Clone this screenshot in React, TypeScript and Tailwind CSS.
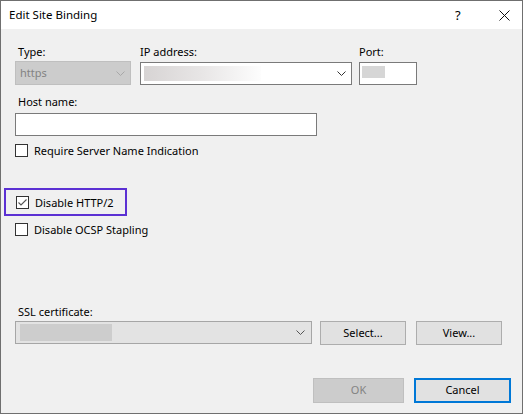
import type { ReactNode } from 'react';

const Chevron = ({ color }: { color: string }) => (
  <svg width="9" height="5" viewBox="0 0 9 5" fill="none">
    <path d="M0.5 0.5 L4.5 4.5 L8.5 0.5" stroke={color} strokeWidth="1" />
  </svg>
);

const CheckBox = ({ checked, label }: { checked?: boolean; label: string }) => (
  <div className="flex items-center h-[15px]">
    <div className="w-[13px] h-[13px] border border-[#333333] bg-white flex items-center justify-center">
      {checked && (
        <svg width="11" height="11" viewBox="0 0 11 11" fill="none">
          <path d="M1.5 5.5 L4 8 L9.5 2.5" stroke="#555555" strokeWidth="1.1" />
        </svg>
      )}
    </div>
    <span className="ml-[6px] leading-[15px]">{label}</span>
  </div>
);

const Button = ({ children, className }: { children: ReactNode; className: string }) => (
  <div className={`flex items-center justify-center ${className}`}>{children}</div>
);

const EditSiteBinding = () => {
  return (
    <div
      className="w-[523px] h-[414px] border border-[#6f6f6f] bg-[#f0f0f0] flex flex-col text-[11px] text-black overflow-hidden"
      style={{ fontFamily: '"Segoe UI", "Noto Sans", sans-serif' }}
    >
      {/* title bar */}
      <div className="h-[28px] bg-white flex items-center pl-[8px] shrink-0">
        <span className="flex-1 leading-[16px] text-[11.5px]">Edit Site Binding</span>
        <span className="w-[10px] text-[13px] leading-[16px] mr-[34px]">?</span>
        <svg width="11" height="11" viewBox="0 0 11 11" className="mr-[12px]">
          <path d="M0.5 0.5 L10.5 10.5 M10.5 0.5 L0.5 10.5" stroke="#111" strokeWidth="1" />
        </svg>
      </div>

      <div className="flex flex-col pl-[14px]">
        {/* type / ip / port */}
        <div className="flex mt-[15px] leading-[16px]">
          <span className="w-[124px] pl-[3px]">Type:</span>
          <span className="w-[220px] pl-[1px]">IP address:</span>
          <span>Port:</span>
        </div>
        <div className="flex mt-[1px] items-start">
          <div className="w-[116px] h-[24px] bg-[#cccccc] border border-[#bfbfbf] flex items-center pl-[4px] pr-[5px] text-[#838383]">
            <span className="flex-1">https</span>
            <Chevron color="#a8a8a8" />
          </div>
          <div className="ml-[9px] mt-[1px] w-[212px] h-[23px] bg-white border border-[#7a7a7a] flex items-center pl-[3px] pr-[5px]">
            <div className="w-[117px] h-[15px] bg-gradient-to-r from-[#d7d4d4] via-[#e8e6e6] to-[#fdfdfd]" />
            <div className="flex-1" />
            <Chevron color="#333333" />
          </div>
          <div className="ml-[7px] mt-[1px] w-[58px] h-[23px] bg-white border border-[#7a7a7a] pl-[2px] pt-[3px]">
            <div className="w-[23px] h-[12px] bg-[#d6d6d6]" />
          </div>
        </div>

        {/* host name */}
        <span className="mt-[9px] pl-[3px] leading-[16px]">Host name:</span>
        <div className="mt-[3px] w-[302px] h-[23px] bg-white border border-[#7a7a7a]" />

        <div className="mt-[7px]">
          <CheckBox label="Require Server Name Indication" />
        </div>

        <div className="mt-[30px] -ml-[11px] w-[123px] h-[28px] border-2 border-[#5b30d3] flex items-center pl-[10px]">
          <CheckBox checked label="Disable HTTP/2" />
        </div>

        <div className="mt-[6px]">
          <CheckBox label="Disable OCSP Stapling" />
        </div>

        {/* certificate */}
        <span className="mt-[67px] pl-[3px] leading-[16px]">SSL certificate:</span>
        <div className="flex mt-[1px] items-start">
          <div className="w-[297px] h-[23px] bg-[#e3e3e3] border border-[#a6a6a6] flex items-center pl-[4px] pr-[6px]">
            <div className="w-[92px] h-[17px] bg-[#cdcdcd]" />
            <div className="flex-1" />
            <Chevron color="#555555" />
          </div>
          <Button className="ml-[8px] w-[86px] h-[24px] bg-[#e1e1e1] border border-[#adadad]">Select...</Button>
          <Button className="ml-[10px] w-[86px] h-[24px] bg-[#e1e1e1] border border-[#adadad]">View...</Button>
        </div>

        {/* dialog buttons */}
        <div className="flex mt-[33px] pl-[298px]">
          <Button className="w-[91px] h-[25px] bg-[#cccccc] border border-[#bfbfbf] text-[#838383]">OK</Button>
          <Button className="ml-[10px] w-[97px] h-[25px] bg-[#e1e1e1] border-2 border-[#0078d7]">Cancel</Button>
        </div>
      </div>
    </div>
  );
};

export default function App() {
  return <EditSiteBinding />;
}
